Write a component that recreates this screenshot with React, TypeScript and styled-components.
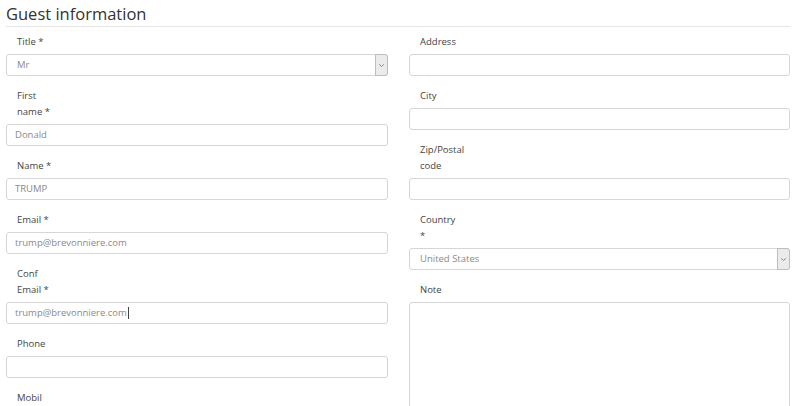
import React from "react";
import styled, { createGlobalStyle } from "styled-components";

const Global = createGlobalStyle`
  html, body { margin: 0; padding: 0; background: #fff; }
  body { font-family: "Open Sans", "Liberation Sans", sans-serif; overflow: hidden; }
  * { box-sizing: border-box; }
`;

const Page = styled.div`
  padding: 2px 10px 0 6px;
  width: 800px;
  height: 406px;
  overflow: hidden;
`;

const Heading = styled.h2`
  margin: 0;
  font-size: 16.5px;
  font-weight: 400;
  color: #333;
  line-height: 24px;
  border-bottom: 1px solid #e5e5e5;
`;

const Columns = styled.div`
  display: grid;
  grid-template-columns: 382px 381px;
  column-gap: 21px;
  padding-top: 7px;
`;

const Column = styled.div`
  display: flex;
  flex-direction: column;
`;

const Field = styled.div`
  display: flex;
  flex-direction: column;
  margin-bottom: 12px;
`;

const Label = styled.div`
  padding-left: 11px;
  font-size: 9.5px;
  line-height: 16px;
  color: #444;
  margin-bottom: 4px;
`;

const Box = styled.div<{ $indent: number; $tall?: boolean }>`
  position: relative;
  height: ${(p) => (p.$tall ? "140px" : "22px")};
  border: 1px solid #d6d6d6;
  border-radius: 3px;
  padding-left: ${(p) => p.$indent}px;
  font-size: 9.5px;
  line-height: 20px;
  color: #8a8a8a;
  display: flex;
  align-items: ${(p) => (p.$tall ? "flex-start" : "center")};
`;

const Caret = styled.span`
  display: inline-block;
  width: 1px;
  height: 12px;
  background: #444;
  margin-left: 1px;
`;

const Arrow = styled.div`
  position: absolute;
  right: -1px;
  top: -1px;
  bottom: -1px;
  width: 13px;
  background: #ebebeb;
  border: 1px solid #bdbdbd;
  border-radius: 0 3px 3px 0;
  display: flex;
  align-items: center;
  justify-content: center;
`;

const Chevron = () => (
  <svg width="7" height="5" viewBox="0 0 7 5">
    <path d="M1.2 1.3 L3.5 3.5 L5.8 1.3" fill="none" stroke="#888" strokeWidth="1" />
  </svg>
);

type F = {
  label: string[];
  value?: string;
  select?: boolean;
  caret?: boolean;
  tall?: boolean;
};

const left: F[] = [
  { label: ["Title *"], value: "Mr", select: true },
  { label: ["First", "name *"], value: "Donald" },
  { label: ["Name *"], value: "TRUMP" },
  { label: ["Email *"], value: "trump@brevonniere.com" },
  { label: ["Conf", "Email *"], value: "trump@brevonniere.com", caret: true },
  { label: ["Phone"] },
  { label: ["Mobil"] },
];

const right: F[] = [
  { label: ["Address"] },
  { label: ["City"] },
  { label: ["Zip/Postal", "code"] },
  { label: ["Country", "*"], value: "United States", select: true },
  { label: ["Note"], tall: true },
];

const FieldView = ({ f }: { f: F }) => (
  <Field>
    <Label>
      {f.label.map((l, i) => (
        <div key={i}>{l}</div>
      ))}
    </Label>
    <Box $indent={f.select ? 10 : 8} $tall={f.tall}>
      {f.value}
      {f.caret && <Caret />}
      {f.select && (
        <Arrow>
          <Chevron />
        </Arrow>
      )}
    </Box>
  </Field>
);

export default function App() {
  return (
    <Page>
      <Global />
      <Heading>Guest information</Heading>
      <Columns>
        <Column>
          {left.map((f, i) => (
            <FieldView key={i} f={f} />
          ))}
        </Column>
        <Column>
          {right.map((f, i) => (
            <FieldView key={i} f={f} />
          ))}
        </Column>
      </Columns>
    </Page>
  );
}
